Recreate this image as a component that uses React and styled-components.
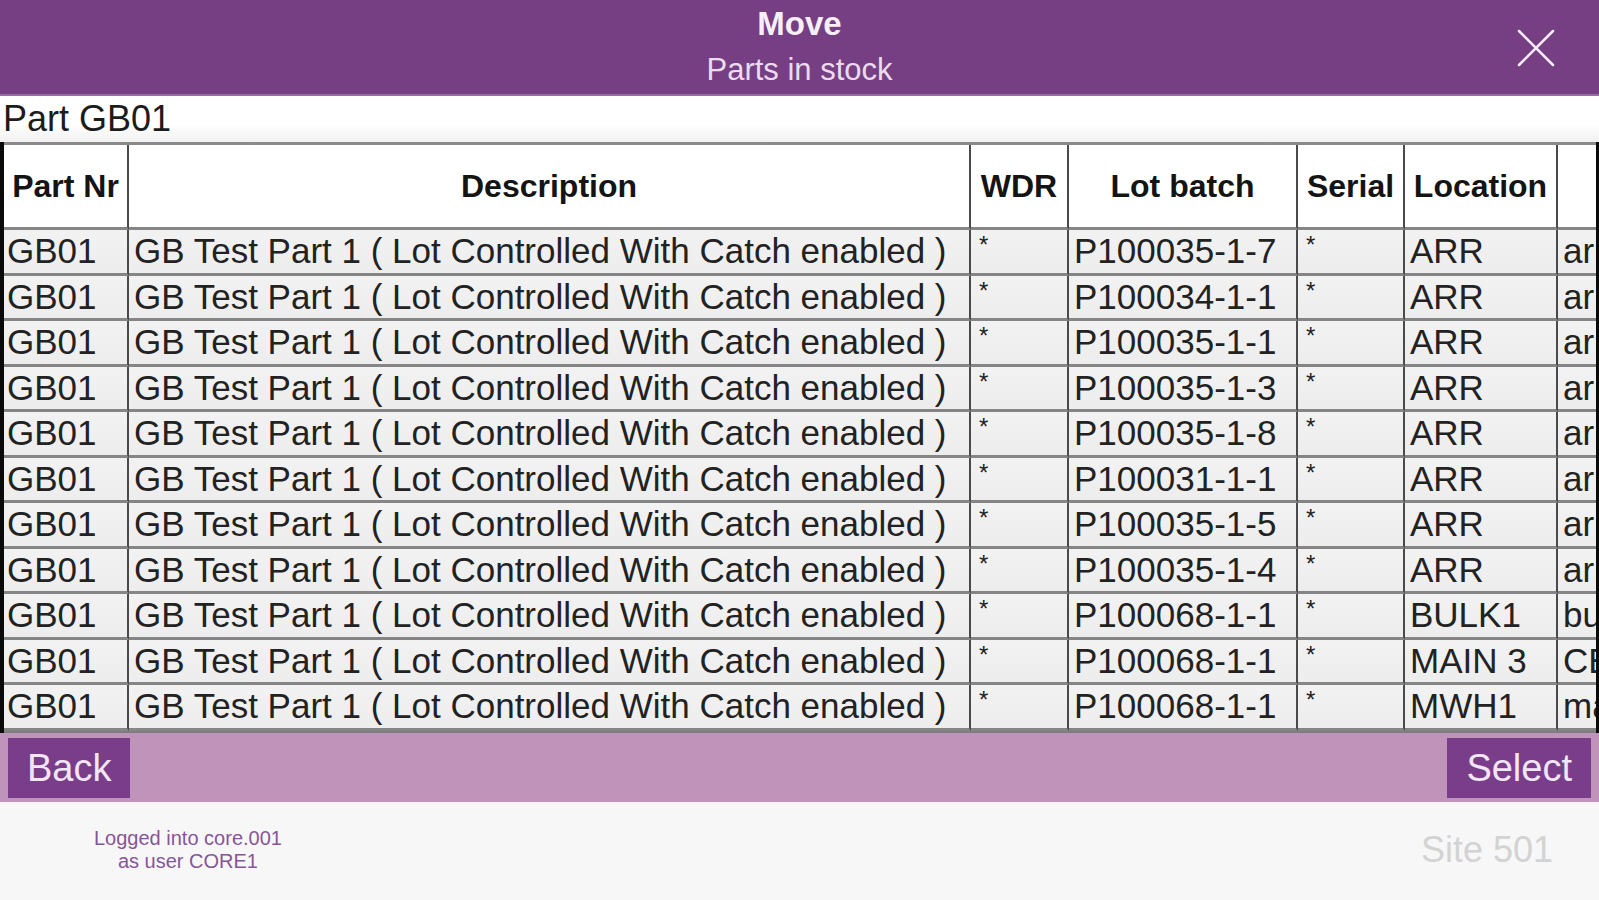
import React from "react";
import styled, { createGlobalStyle } from "styled-components";

const Global = createGlobalStyle`
  html, body { margin: 0; padding: 0; background: #f7f7f7; }
  body { font-family: "Liberation Sans", Arial, Helvetica, sans-serif; }
  #root { width: 1599px; height: 900px; overflow: hidden; }
  * { box-sizing: border-box; }
`;

const Screen = styled.div`
  width: 1599px;
  height: 900px;
  display: flex;
  flex-direction: column;
  background: #f7f7f7;
`;

const Header = styled.header`
  height: 96px;
  flex: none;
  background: #763f83;
  border-bottom: 2px solid #9a6ba5;
  display: grid;
  grid-template-columns: 1fr auto 1fr;
  align-items: start;
`;

const TitleBlock = styled.div`
  grid-column: 2;
  display: flex;
  flex-direction: column;
  align-items: center;
  padding-top: 4px;
`;

const Title = styled.div`
  font-size: 33px;
  line-height: 40px;
  font-weight: bold;
  color: #f6eff8;
`;

const Subtitle = styled.div`
  font-size: 31px;
  line-height: 36px;
  margin-top: 8px;
  color: #eadcee;
`;

const CloseButton = styled.button`
  grid-column: 3;
  justify-self: end;
  align-self: center;
  margin-right: 43px;
  margin-top: 2px;
  width: 40px;
  height: 40px;
  padding: 0;
  border: none;
  background: transparent;
  display: flex;
  cursor: pointer;
`;

const PartLabel = styled.div`
  height: 46px;
  flex: none;
  padding-left: 3px;
  font-size: 36px;
  line-height: 46px;
  color: #1c1c1c;
  background: linear-gradient(#ffffff, #ffffff 60%, #f1f1f1);
`;

const TableViewport = styled.div`
  height: 591px;
  flex: none;
  overflow: hidden;
  border-left: 4px solid #0a0a0a;
  border-right: 3px solid #0a0a0a;
  background: #7d7d7d;
`;

const Table = styled.table`
  table-layout: fixed;
  width: 1704px;
  border-collapse: separate;
  border-spacing: 0;
  border-top: 3px solid #8a8a8a;
  background: #eeeeee;
`;

const HeadCell = styled.th`
  width: ${(p) => p.$w}px;
  height: 85px;
  padding: 0 4px;
  background: #ffffff;
  border-right: 2px solid #4a4a4a;
  border-bottom: 3px solid #858585;
  font-size: 32px;
  font-weight: bold;
  color: #141414;
  text-align: center;
  vertical-align: middle;
  white-space: nowrap;
  overflow: hidden;
`;

const Cell = styled.td`
  height: 45.5px;
  padding: 0 0 0 ${(p) => (p.$first ? 3 : 5)}px;
  background: linear-gradient(#f2f2f2, #ededed);
  border-right: 2px solid #4a4a4a;
  border-bottom: 3px solid #858585;
  font-size: 35px;
  line-height: 40px;
  color: #222222;
  white-space: nowrap;
  overflow: hidden;
  vertical-align: middle;
`;

const Star = styled.span`
  display: inline-block;
  font-size: 24px;
  line-height: 24px;
  vertical-align: 10px;
  padding-left: 3px;
`;

const ActionBar = styled.div`
  height: 69px;
  flex: none;
  padding: 5px 8px 4px;
  background: #c094ba;
  display: flex;
  justify-content: space-between;
  align-items: stretch;
`;

const ActionButton = styled.button`
  height: 60px;
  padding: 0 19px;
  border: none;
  background: #7a3d8a;
  color: #f1e6f4;
  font-family: "Liberation Sans", Arial, Helvetica, sans-serif;
  font-size: 38px;
  line-height: 60px;
  cursor: pointer;
`;

const StatusBar = styled.footer`
  flex: 1;
  display: flex;
  justify-content: space-between;
  align-items: center;
  padding: 0 46px 2px 94px;
  background: #f7f7f7;
`;

const LoginInfo = styled.div`
  font-size: 20px;
  line-height: 23px;
  text-align: center;
  color: #87559a;
`;

const Site = styled.div`
  font-size: 36px;
  color: #d3d3d3;
`;

const columns = [
  { label: "Part Nr", w: 125 },
  { label: "Description", w: 842 },
  { label: "WDR", w: 98 },
  { label: "Lot batch", w: 229 },
  { label: "Serial", w: 107 },
  { label: "Location", w: 153 },
  { label: "", w: 150 },
];

const desc = "GB Test Part 1 ( Lot Controlled With Catch enabled )";

const rows = [
  ["P100035-1-7", "ARR", "arrivals"],
  ["P100034-1-1", "ARR", "arrivals"],
  ["P100035-1-1", "ARR", "arrivals"],
  ["P100035-1-3", "ARR", "arrivals"],
  ["P100035-1-8", "ARR", "arrivals"],
  ["P100031-1-1", "ARR", "arrivals"],
  ["P100035-1-5", "ARR", "arrivals"],
  ["P100035-1-4", "ARR", "arrivals"],
  ["P100068-1-1", "BULK1", "bulk 1"],
  ["P100068-1-1", "MAIN 3", "CENTRAL"],
  ["P100068-1-1", "MWH1", "main wh"],
];

function CloseIcon() {
  return (
    <svg width="40" height="40" viewBox="0 0 40 40">
      <line x1="3" y1="3" x2="37" y2="37" stroke="#f3ebf5" strokeWidth="2.5" strokeLinecap="round" />
      <line x1="37" y1="3" x2="3" y2="37" stroke="#f3ebf5" strokeWidth="2.5" strokeLinecap="round" />
    </svg>
  );
}

export default function App() {
  return (
    <>
      <Global />
      <Screen>
        <Header>
          <TitleBlock>
            <Title>Move</Title>
            <Subtitle>Parts in stock</Subtitle>
          </TitleBlock>
          <CloseButton aria-label="Close">
            <CloseIcon />
          </CloseButton>
        </Header>
        <PartLabel>Part GB01</PartLabel>
        <TableViewport>
          <Table>
            <thead>
              <tr>
                {columns.map((c, i) => (
                  <HeadCell key={i} $w={c.w}>
                    {c.label}
                  </HeadCell>
                ))}
              </tr>
            </thead>
            <tbody>
              {rows.map((r, i) => (
                <tr key={i}>
                  <Cell $first>GB01</Cell>
                  <Cell>{desc}</Cell>
                  <Cell><Star>*</Star></Cell>
                  <Cell>{r[0]}</Cell>
                  <Cell><Star>*</Star></Cell>
                  <Cell>{r[1]}</Cell>
                  <Cell>{r[2]}</Cell>
                </tr>
              ))}
            </tbody>
          </Table>
        </TableViewport>
        <ActionBar>
          <ActionButton>Back</ActionButton>
          <ActionButton>Select</ActionButton>
        </ActionBar>
        <StatusBar>
          <LoginInfo>
            Logged into core.001
            <br />
            as user CORE1
          </LoginInfo>
          <Site>Site 501</Site>
        </StatusBar>
      </Screen>
    </>
  );
}
